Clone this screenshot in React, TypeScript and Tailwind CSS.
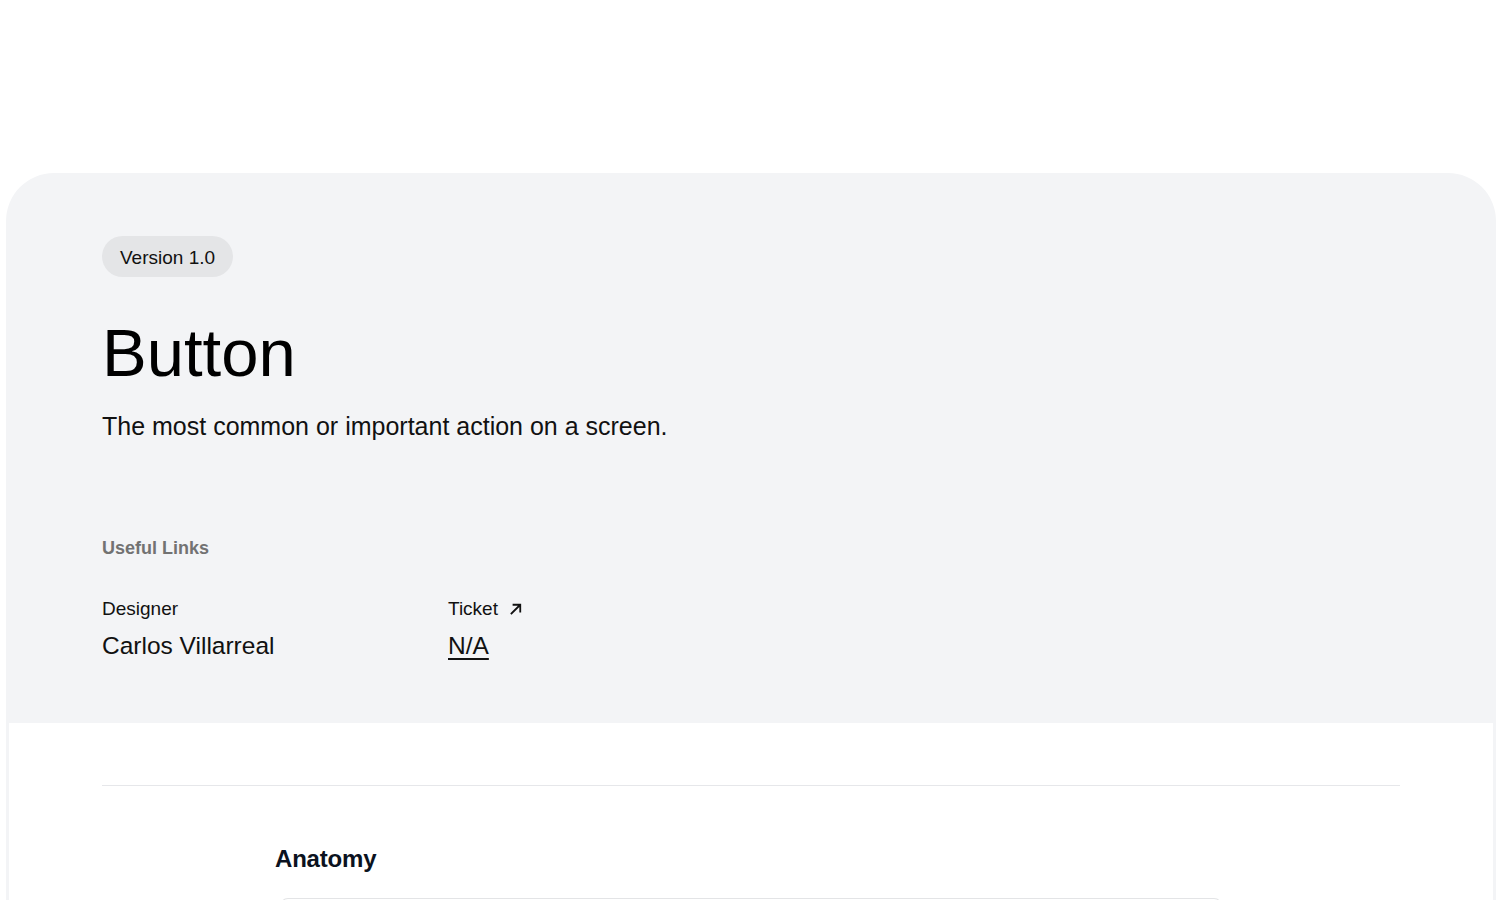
import React from 'react';

const font = { fontFamily: '"Liberation Sans", Arial, Helvetica, sans-serif' };

const ArrowUpRight: React.FC = () => (
  <svg width="14" height="14" viewBox="0 0 14 14" fill="none" className="ml-[11px]">
    <path d="M2.5 11.5L11 3M4.5 2.75H11.25V9.5" stroke="currentColor" strokeWidth="1.8" strokeLinecap="square" />
  </svg>
);

const App: React.FC = () => {
  return (
    <div className="min-h-[900px] bg-white pt-[173px] text-black" style={font}>
      <div className="mx-[6px] rounded-t-[48px] bg-[#f3f4f6] px-[3px]">
        {/* Header */}
        <div className="h-[550px] px-[93px] pt-[63px]">
          <span className="inline-flex h-[41px] items-center rounded-full bg-[#e4e5e7] px-[18px] pt-[3px] text-[19px] text-[#111]">
            Version 1.0
          </span>
          <h1 className="mt-[42px] text-[67px] leading-[1] font-normal">Button</h1>
          <p className="mt-[25px] text-[25px] leading-[1.2] text-[#111]">
            The most common or important action on a screen.
          </p>

          <div className="mt-[94px] text-[18px] font-bold text-[#727272]">Useful Links</div>

          <div className="mt-[33px] flex">
            <div className="w-[346px]">
              <div className="text-[19px] text-[#111]">Designer</div>
              <div className="mt-[4px] text-[24.5px] text-[#111]">Carlos Villarreal</div>
            </div>
            <div>
              <div className="flex items-center text-[19px] text-[#111]">
                Ticket
                <ArrowUpRight />
              </div>
              <a className="mt-[4px] block text-[24.5px] text-[#111] underline underline-offset-[4px] decoration-[1.5px]">
                N/A
              </a>
            </div>
          </div>
        </div>

        {/* Content */}
        <div className="bg-white pt-[62px]">
          <div className="mx-[93px] border-t border-[#e6e7ea]" />
          <div className="px-[266px] pt-[55px]">
            <h2 className="text-[24px] font-bold tracking-[-0.2px] text-[#0b1220]">Anatomy</h2>
            <div className="ml-[5px] mt-[21px] h-[200px] w-[942px] rounded-t-[8px] border border-b-0 border-[#e3e4e6]" />
          </div>
        </div>
      </div>
    </div>
  );
};

export default App;
